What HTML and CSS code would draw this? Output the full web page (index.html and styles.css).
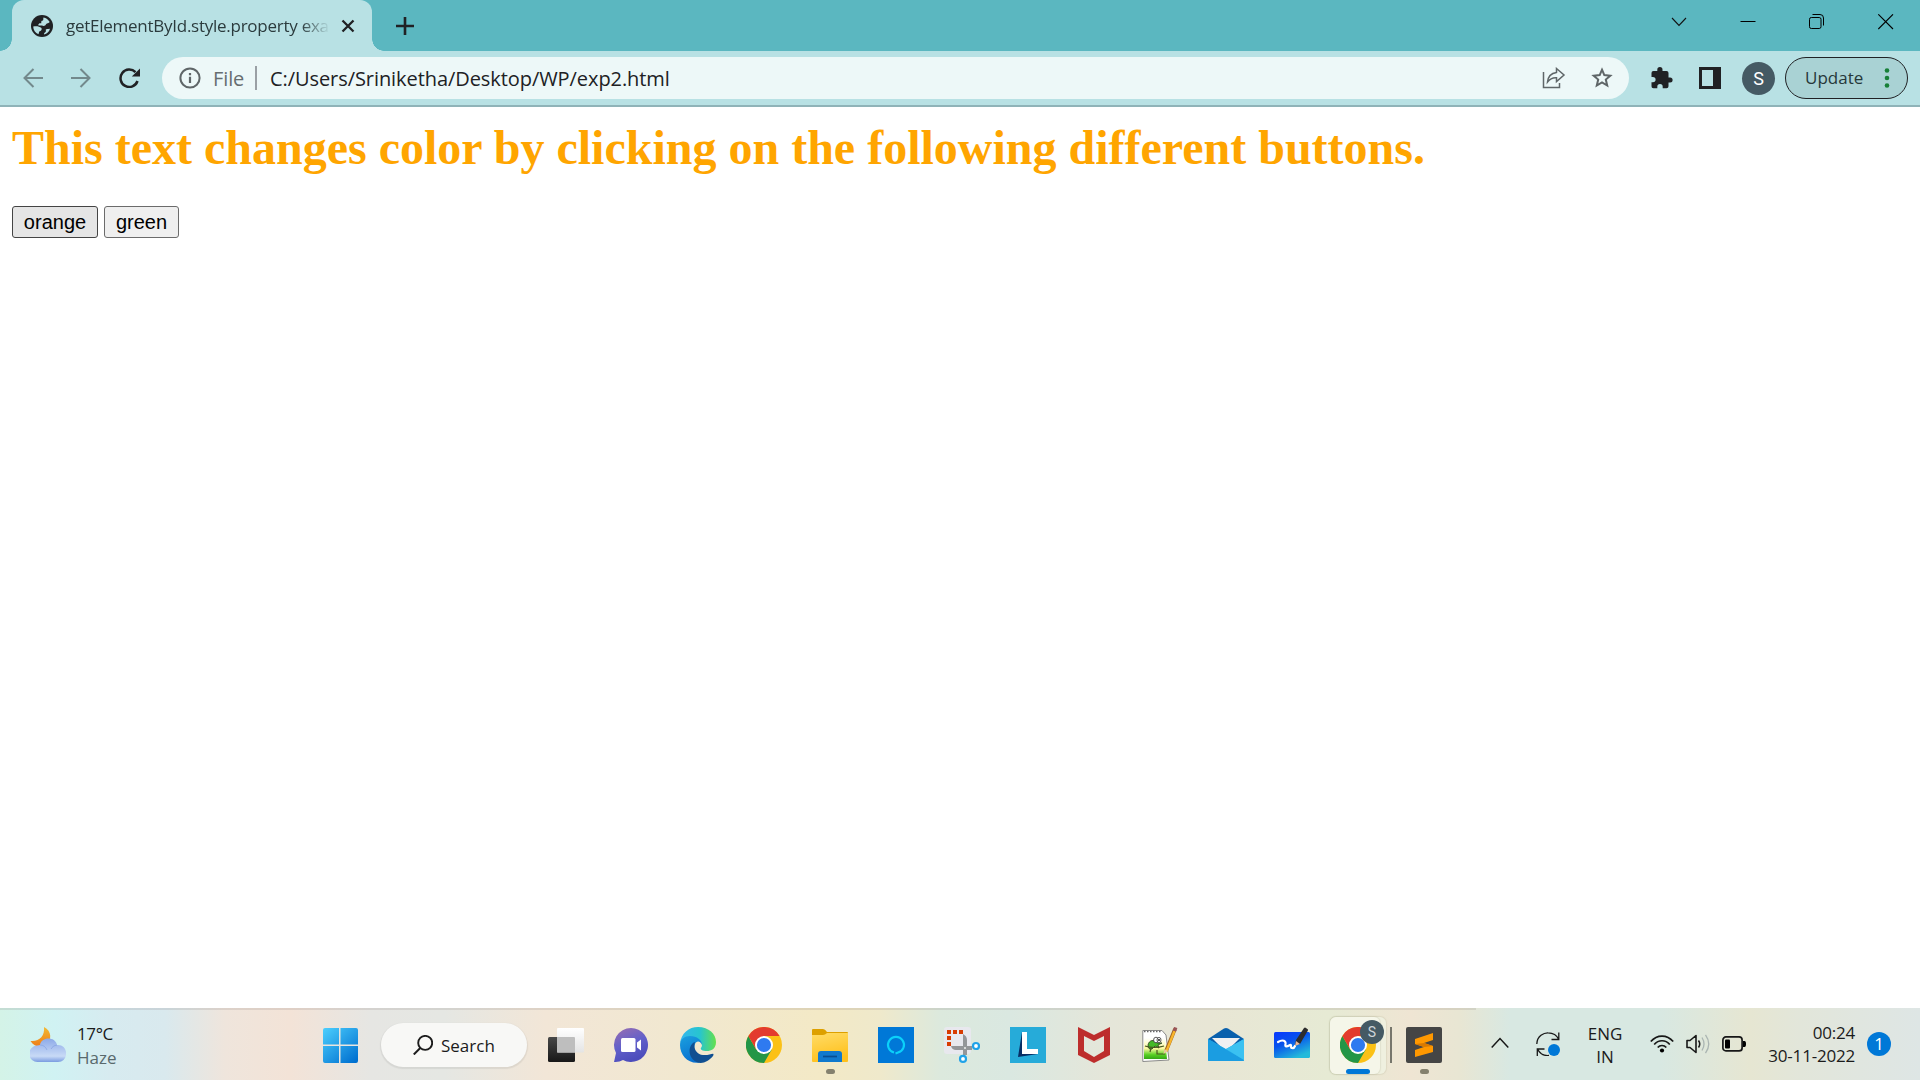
FILE: index.html
```html
<!DOCTYPE html>
<html lang="en">
<head>
<meta charset="utf-8">
<title>getElementById.style.property example</title>
<link rel="stylesheet" href="styles.css">
</head>
<body>
<header class="tabstrip">
  <div class="tab">
    <svg class="globe" viewBox="0 0 22 22"><circle cx="11" cy="11" r="11" fill="#202124"/><path d="M12.500 2.400C15 2.900 17.500 4.500 18.700 7C17.800 8.500 16 8 15 9.300C14.500 10.800 12.800 11.300 11 10.600H7.500C6.800 8.500 9 8.300 10.300 8.300C10.200 6.500 10 5.600 12 5.400C12.700 4.500 12 3.500 12.500 2.400Z" fill="#b8e1e4"/><path d="M2.200 11.400C5 11 8 10.800 10.500 13C11.200 14.800 10 16 8.200 16.500L7.500 19.200C4.300 17.800 2.200 15 2.200 11.400ZM13 19.500C12.500 17.700 14.500 17.600 15.100 16C14 14.500 15.300 13.600 17 14L19 13.800C18 17 16 19 13 19.500Z" fill="#b8e1e4"/></svg>
    <span class="tab-title">getElementById.style.property exa</span>
    <svg class="tab-close" viewBox="0 0 14 14"><path d="M1.500 1.500L12.500 12.500M12.500 1.500L1.500 12.500" stroke="#202124" stroke-width="2.300"/></svg>
  </div>
  <svg class="new-tab" viewBox="0 0 18 18"><path d="M9 0V18M0 9H18" stroke="#202124" stroke-width="2.600"/></svg>
  <div class="window-controls">
    <svg viewBox="0 0 16 16"><path d="M1 4L8 11.500L15 4" fill="none" stroke="#111" stroke-width="1.100"/></svg>
    <svg viewBox="0 0 16 16"><path d="M.5 7.500H15.500" stroke="#000"/></svg>
    <svg viewBox="0 0 16 16"><rect x=".5" y="3.500" width="11.500" height="11" rx="1.800" fill="none" stroke="#000"/><path d="M3.500 .5H11Q14.500 .5 14.500 4V11.500" fill="none" stroke="#000"/></svg>
    <svg viewBox="0 0 16 16"><path d="M.3 .3L15 15M15 .3L.3 15" stroke="#000" stroke-width="1.100"/></svg>
  </div>
</header>
<nav class="toolbar">
  <svg class="nav-icon" viewBox="0 0 20 20"><path d="M20 10H1.500M10.500 1L1.500 10L10.500 19" fill="none" stroke="#73898c" stroke-width="2"/></svg>
  <svg class="nav-icon" viewBox="0 0 20 20"><path d="M0 10H18.500M9.500 1L18.500 10L9.500 19" fill="none" stroke="#73898c" stroke-width="2"/></svg>
  <svg class="nav-icon reload" viewBox="0 0 22 20"><path d="M18.500 13A8.700 8.700 0 1 1 16.500 4.200" fill="none" stroke="#202124" stroke-width="2.500"/><path d="M21 .5V8.500H12.800Z" fill="#202124"/></svg>
  <div class="omnibox">
    <svg class="info" viewBox="0 0 22 22"><circle cx="11" cy="11" r="9.600" fill="none" stroke="#5f6668" stroke-width="2"/><path d="M11 9.800V16M11 6V8.300" stroke="#5f6668" stroke-width="2.200"/></svg>
    <span class="scheme">File</span>
    <span class="divider"></span>
    <span class="url">C:/Users/Sriniketha/Desktop/WP/exp2.html</span>
    <svg class="share" viewBox="0 0 24 22"><path d="M1.500 5V20.500H17.500V16" fill="none" stroke="#5f6668" stroke-width="1.500"/><path d="M14.500 1.500L22 8L14.500 14.500V10.800C10.500 10.500 7.800 12 5.500 15C6 9.500 9.500 6 14.500 5.400Z" fill="none" stroke="#5f6668" stroke-width="1.500"/></svg>
    <svg class="star" viewBox="0 0 22 22"><path d="M11 2.700L13.300 8.100L19.300 8.700L14.800 12.600L16.200 18.500L11 15.400L5.800 18.500L7.200 12.600L2.700 8.700L8.700 8.100Z" fill="none" stroke="#5f6668" stroke-width="2"/></svg>
  </div>
  <svg class="puzzle" viewBox="0 0 22 22"><path d="M19.100 10.500H17.500V6A2 2 0 0 0 15.500 4H11.500V2.700A2.600 2.600 0 0 0 6.300 2.700V4H2.400A2 2 0 0 0 .5 6V9.900H1.900A2.700 2.700 0 0 1 1.900 15.300H.5V19.200A2 2 0 0 0 2.500 21.300H6.300V19.800A2.700 2.700 0 0 1 11.700 19.800V21.300H15.500A2 2 0 0 0 17.500 19.300V15.500H19.100A2.500 2.500 0 0 0 19.100 10.500Z" fill="#202124"/></svg>
  <svg class="panel" viewBox="0 0 22 22"><path d="M0 0H22V22H0ZM3 3V19H14V3Z" fill="#202124" fill-rule="evenodd"/></svg>
  <span class="avatar">S</span>
  <div class="update"><span>Update</span><svg viewBox="0 0 6 20"><g fill="#188038"><circle cx="3" cy="2.500" r="2.300"/><circle cx="3" cy="10" r="2.300"/><circle cx="3" cy="17.500" r="2.300"/></g></svg></div>
</nav>
<main class="page">
  <h1 class="heading">This text changes color by clicking on the following different buttons.</h1>
  <div class="buttons">
    <button class="btn btn-active">orange</button>
    <button class="btn btn-green">green</button>
  </div>
</main>
<footer class="taskbar">
  <div class="weather">
    <svg viewBox="0 0 36 36"><defs><linearGradient id="moon" x2="0" y2="1"><stop stop-color="#f2ba35"/><stop offset="1" stop-color="#ef7d17"/></linearGradient><linearGradient id="cloud" x2="0" y2="1"><stop stop-color="#8daae8"/><stop offset=".75" stop-color="#c8daf6"/><stop offset="1" stop-color="#799be0"/></linearGradient></defs><path d="M14 0C22 4 22 13 16 18C11 21 4 20 .5 14C9 15 15 9 14 0Z" fill="url(#moon)"/><path d="M8 35A7 7 0 0 1 7 18.500Q9 18 10 18C11 10 25 9 27 18C39 17 39 35 28 35Z" fill="url(#cloud)"/><path d="M10 18Q15 18 17 23M27 18Q23 18 21 22" fill="none" stroke="#7e9ce0" opacity=".6"/></svg>
    <div class="weather-text"><span class="temp">17°C</span><span class="haze">Haze</span></div>
  </div>
  <div class="apps">
    <div class="app"><svg viewBox="0 0 36 36"><defs><linearGradient id="win" gradientUnits="userSpaceOnUse" x1="0" y1="0" x2="32" y2="36"><stop stop-color="#4fd2ff"/><stop offset="1" stop-color="#0070d0"/></linearGradient></defs><path d="M3 1H17V17.500H1V3Q1 1 3 1ZM18.500 1H34Q36 1 36 3V17.500H18.500ZM1 19H17V36H3Q1 36 1 34ZM18.500 19H36V34Q36 36 34 36H18.500Z" fill="url(#win)"/></svg></div>
    <div class="search-slot"><div class="search"><svg viewBox="0 0 20 20"><circle cx="12.200" cy="7.900" r="7" fill="none" stroke="#1c1c1c" stroke-width="1.900"/><path d="M7.500 12.800L.8 19.500" stroke="#1c1c1c" stroke-width="2"/></svg><span>Search</span></div></div>
    <div class="app"><svg viewBox="0 0 36 36"><defs><linearGradient id="tv" x2="0" y2="1"><stop stop-color="#484848"/><stop offset="1" stop-color="#181818"/></linearGradient><linearGradient id="tw" x2="0" y2="1"><stop stop-color="#fff"/><stop offset="1" stop-color="#e4e4e4"/></linearGradient></defs><rect y="10" width="27" height="25" rx="1.500" fill="url(#tv)"/><rect x="9" y="1" width="27" height="24.500" rx="1" fill="url(#tw)"/><path d="M9 10H26Q27 10 27 11V25.500H9Z" fill="#bebebe"/></svg></div>
    <div class="app"><svg viewBox="0 0 36 36"><defs><linearGradient id="chat" x2=".4" y2="1"><stop stop-color="#9a6eb0"/><stop offset=".55" stop-color="#6260ca"/><stop offset="1" stop-color="#4d4dbc"/></linearGradient></defs><path d="M17 1A17 17 0 1 1 9 33Q5 35.500 0 35L2 26A17 17 0 0 1 17 1Z" fill="url(#chat)"/><rect x="7" y="11" width="14.500" height="14" rx="1.500" fill="#fff"/><path d="M23 15.500L27 12.500V23.500L23 20.500Z" fill="#fff"/></svg></div>
    <div class="app"><svg viewBox="0 0 36 36"><defs><linearGradient id="e1"><stop stop-color="#35b6ef"/><stop offset=".55" stop-color="#27c5cf"/><stop offset="1" stop-color="#64e04d"/></linearGradient><linearGradient id="e2" x2=".4" y2="1"><stop stop-color="#1ba0df"/><stop offset="1" stop-color="#0870cf"/></linearGradient></defs><path d="M0 17C1 6 9 0 18 0C29 0 36 7 36 15C36 22 31 24 27 24C22 24 20 22.500 21 21C24 17 20 13 15 12C8 9 2 11 0 17Z" fill="url(#e1)"/><path d="M0 18C0 12 5 9 10 9C17 9 22 13 22 18C20 13 16 14 15 17C12 24 18 32 25 34C11 40 0 30 0 18Z" fill="url(#e2)"/><path d="M15 15C13 21 16 27 23 28C27 28.500 31 27 33 26.700Q34 27 33 29C29 34 23 37 18 35.500C10 33 7 23 12 17Q13 15.500 15 15Z" fill="#104f91"/></svg></div>
    <div class="app"><svg viewBox="0 0 36 36"><g id="chrome"><circle cx="18" cy="18" r="18" fill="#fbc116"/><path d="M2.400 9A18 18 0 0 0 18 36L25.800 22.500L10.200 22.500Z" fill="#239647"/><path d="M2.400 9A18 18 0 0 1 33.600 9H18L10.200 22.500Z" fill="#e33b2e"/><circle cx="18" cy="18" r="9" fill="#fff"/><circle cx="18" cy="18" r="7.100" fill="#2e7af0"/></g></svg></div>
    <div class="app"><svg viewBox="0 0 36 36"><defs><linearGradient id="fold" x2=".3" y2="1"><stop stop-color="#ffdc68"/><stop offset="1" stop-color="#ffc11d"/></linearGradient></defs><path d="M0 3Q0 2 1 2H11Q13 2 15 5H35Q36 5 36 6V16H0Z" fill="#dda000"/><path d="M0 8H11Q13 8 15 6H36V34Q36 35 35 35H1Q0 35 0 34Z" fill="url(#fold)"/><path d="M6 35V27Q6 24 9 24H27Q30 24 30 27V35Z" fill="#1079cd"/><path d="M11 29.500H25" stroke="#084d91" stroke-width="1.700"/></svg><i class="running"></i></div>
    <div class="app"><svg viewBox="0 0 36 36"><path d="M0 0H36V36H0Z" fill="#0078d7"/><path d="M16 25.600A8 8 0 1 1 20 25.600L17.500 26.500" fill="none" stroke="#0bd1fa" stroke-width="2.100"/></svg></div>
    <div class="app"><svg viewBox="0 0 36 36"><rect width="27" height="27" rx="3" fill="#e8e8ee"/><g fill="#d83b01"><path d="M3 3H7V7H3ZM9 3H13V7H9ZM15 3H19V7H15ZM3 9H7V13H3ZM3 15H7V19H3Z"/></g><path d="M19 7Q23 9 23 13V28H19ZM7 19H28V23H12Q8 23 7 19Z" fill="#949699"/><circle cx="21" cy="21" r="1" fill="#eee"/><circle cx="32" cy="19" r="3" fill="#fff" stroke="#20a2e8" stroke-width="2.200"/><circle cx="19" cy="31.900" r="3" fill="#fff" stroke="#20a2e8" stroke-width="2.200"/></svg></div>
    <div class="app"><svg viewBox="0 0 36 36"><path d="M0 0H36V36H0Z" fill="#26abd9"/><path d="M12 5L8 30L28 27L17 22Z" fill="#082e65"/><path d="M12 5H17V22H28V27H12Z" fill="#fff"/></svg></div>
    <div class="app"><svg viewBox="0 0 36 36"><path d="M2 0L18 8L34 0V28L18 36L2 28ZM8 9V24L18 30L28 24V9L18 14Z" fill="#bd2d2c" fill-rule="evenodd"/></svg></div>
    <div class="app"><svg viewBox="0 0 36 36"><defs><linearGradient id="note" x2="0" y2="1"><stop stop-color="#fff"/><stop offset=".5" stop-color="#fbf9a0"/><stop offset=".8" stop-color="#55cf22"/><stop offset="1" stop-color="#35a616"/></linearGradient></defs><path d="M.8 3.500H20L24 8L27 33L.8 34.500Z" fill="#fff" stroke="#8a8a8a"/><path d="M2 11H23L25 32H2Z" fill="url(#note)"/><path d="M2 4.500H20" stroke="#666" stroke-dasharray="1.500 1.500" stroke-width="1.500"/><path d="M6 18C7 13 12 12 15 16L20 16L16 18L17 21L13 19L10 22Q6 23 6 18Z" fill="#45b929" stroke="#243b19" stroke-width=".8"/><ellipse cx="14" cy="13" rx="2.400" ry="2.800" fill="#fff" stroke="#333" stroke-width=".8"/><ellipse cx="17" cy="13" rx="2" ry="2.600" fill="#fff" stroke="#333" stroke-width=".8"/><circle cx="17" cy="13" r=".9"/><path d="M3 19Q12 22 22 19M9 21L8 25M15 23V27H23" stroke="#4a5720" stroke-width="1.200" fill="none"/><path d="M33 2L24 24" stroke="#9e6424" stroke-width="3.600"/><path d="M32.500 4L24.500 24" stroke="#f9b62b" stroke-width="2.300"/><path d="M22.500 22L26 24L21.500 27Z" fill="#e8c99a"/><path d="M33.700 .5L32.500 4" stroke="#9a5557" stroke-width="3.500"/></svg></div>
    <div class="app"><svg viewBox="0 0 36 36"><path d="M0 12L16 1.500Q18 .3 20 1.500L36 12V20H0Z" fill="#0960ad"/><path d="M4 11H32L18 25Z" fill="#f0f0f2"/><path d="M0 12L18 22L36 12V33Q36 34 35 34H1Q0 34 0 33Z" fill="#23b0e9"/><path d="M0 12L36 33Q36 34 35 34H1Q0 34 0 33Z" fill="#1b9de1"/><path d="M36 12L18 22L36 33Z" fill="#3bc1f1"/></svg></div>
    <div class="app"><svg viewBox="0 0 36 36"><defs><linearGradient id="wb" x2=".6" y2="1"><stop stop-color="#0737ff"/><stop offset=".45" stop-color="#0752ec"/><stop offset="1" stop-color="#24bada"/></linearGradient></defs><rect y="5" width="36" height="26" rx="1.500" fill="url(#wb)"/><path d="M4 15C9 12 12 14 11.500 17C10.500 21 14 19 16 18C18 17 16 21 18 21Q20 21.500 21 19" fill="none" stroke="#fff" stroke-width="2.200" stroke-linecap="round"/><path d="M22 13L30 1Q31 0 32 1L34 2.500Q34 4 33 5L26 17L21 18Z" fill="#2d2d2d"/><path d="M22 14L26 17L21 19Z" fill="#e9b899"/></svg></div>
    <div class="app app-current"><div class="tile-back"></div><div class="tile"></div><svg viewBox="0 0 36 36"><use href="#chrome"/></svg><span class="profile">S</span><i class="current"></i></div>
    <div class="app app-sublime"><svg viewBox="0 0 36 36"><rect width="36" height="36" rx="2" fill="#454545"/><path d="M9 12L27 6V13L18 16L27 19V25L9 30V23L18 20L9 17Z" fill="#ff9800"/><path d="M9 17L18 20L27 19L18 16Z" fill="#d97900"/></svg><i class="running"></i></div>
  </div>
  <div class="tray">
    <svg class="chevron" viewBox="0 0 18 12"><path d="M.7 10.500L9 1.500L17.300 10.500" fill="none" stroke="#171717" stroke-width="1.500"/></svg>
    <svg class="sync" viewBox="0 0 24 24"><path d="M.8 12C1 4 8 .7 12 .8C17 .8 21 3.500 22.800 7.500M22.800 .5V7.500H15.500M1.300 24V17H8.500M1.500 17C4 22 8 24 13 23.500" fill="none" stroke="#191919" stroke-width="1.300"/><circle cx="18" cy="18" r="6" fill="#0078d7"/></svg>
    <div class="language"><span>ENG</span><span>IN</span></div>
    <svg class="wifi" viewBox="0 0 24 18"><path d="M.8 6.500C7 -.8 17 -.8 23.200 6.500M4.200 9.500C8.500 4.500 15.500 4.500 19.800 9.500M7.700 12.500C10 9.800 14 9.800 16.300 12.500" fill="none" stroke="#171717" stroke-width="1.700"/><circle cx="12" cy="15.500" r="2.100"/></svg>
    <svg class="sound" viewBox="0 0 24 20"><path d="M1 6.500H4L10 1.500V18.500L4 13.500H1Z" fill="none" stroke="#171717" stroke-width="1.600" stroke-linejoin="round"/><path d="M12.500 6.500Q15 10 12.500 13.500" fill="none" stroke="#171717" stroke-width="1.500"/><path d="M16 3.500Q20 10 16 16.500M19.500 .8Q26 10 19.500 19.200" fill="none" stroke="#aab5b2" stroke-width="1.300"/></svg>
    <svg class="battery" viewBox="0 0 24 16"><rect x=".9" y=".9" width="19.200" height="14" rx="3" fill="none" stroke="#171717" stroke-width="1.700"/><rect x="3" y="3.500" width="5" height="9" rx="1"/><path d="M21 5H22.500Q24 5 24 8T22.500 11H21Z"/></svg>
    <div class="clock"><span class="time">00:24</span><span class="date">30-11-2022</span></div>
    <span class="count">1</span>
  </div>
</footer>
</body>
</html>
```
FILE: styles.css
```css
* { box-sizing: border-box; }
body {
  margin: 0;
  width: 1920px;
  height: 1080px;
  display: flex;
  flex-direction: column;
  overflow: hidden;
  background: #fff;
  font-family: "Open Sans", sans-serif;
}
svg { display: block; flex: none; }
span { white-space: nowrap; }

.tabstrip {
  height: 51px;
  flex: none;
  display: flex;
  padding-left: 12px;
  background: #5bb7c0;
}
.tab {
  position: relative;
  width: 360px;
  height: 51px;
  display: flex;
  align-items: center;
  padding: 0 18px 0 19px;
  border-radius: 12px 12px 0 0;
  background: #b8e1e4;
}
.tab::before, .tab::after {
  content: "";
  position: absolute;
  bottom: 0;
  width: 12px;
  height: 12px;
}
.tab::before { left: -12px; background: radial-gradient(circle at 0 0, transparent 11.5px, #b8e1e4 12px); }
.tab::after { right: -12px; background: radial-gradient(circle at 100% 0, transparent 11.5px, #b8e1e4 12px); }
.globe { width: 22px; height: 22px; }
.tab-title {
  width: 264px;
  margin-left: 13px;
  font-size: 17px;
  line-height: 28px;
  letter-spacing: -.26px;
  color: #2b3b3d;
  -webkit-mask-image: linear-gradient(90deg, #000 235px, transparent 264px);
  mask-image: linear-gradient(90deg, #000 235px, transparent 264px);
}
.tab-close { width: 14px; height: 14px; margin-left: 12px; }
.new-tab { width: 18px; height: 18px; margin: 17px 0 0 24px; }
.window-controls {
  display: flex;
  gap: 53px;
  margin: 14px 26px 0 auto;
}
.window-controls svg { width: 16px; height: 16px; }

.toolbar {
  height: 56px;
  flex: none;
  display: flex;
  align-items: center;
  padding: 0 12px 0 23px;
  border-bottom: 2px solid #8fb3b8;
  background: #b8e1e4;
}
.nav-icon { width: 20px; height: 20px; margin-right: 28px; }
.nav-icon.reload { width: 22px; margin-right: 21px; }
.omnibox {
  width: 1467px;
  height: 42px;
  flex: none;
  display: flex;
  align-items: center;
  padding: 0 16px 0 17px;
  border-radius: 21px;
  background: #edf8f8;
  font-size: 20px;
}
.info { width: 22px; height: 22px; }
.scheme { margin-left: 12px; width: 32px; color: #666d70; letter-spacing: -.1px; }
.divider { width: 2px; height: 24px; margin-left: 10px; background: #9aa0a5; }
.url { margin-left: 13px; color: #202124; letter-spacing: -.07px; }
.share { width: 24px; height: 22px; margin-left: auto; }
.star { width: 22px; height: 22px; margin-left: 25px; }
.puzzle { width: 22px; height: 22px; margin-left: 22px; }
.panel { width: 22px; height: 22px; margin-left: 26px; }
.avatar {
  width: 33px;
  height: 33px;
  flex: none;
  margin-left: 21px;
  border-radius: 50%;
  background: #455a64;
  color: #fff;
  font: 18px/33px Roboto, sans-serif;
  text-align: center;
}
.update {
  width: 123px;
  height: 42px;
  flex: none;
  display: flex;
  align-items: center;
  justify-content: space-between;
  margin-left: 10px;
  padding: 0 17px 0 19px;
  border: 1.5px solid #202124;
  border-radius: 21px;
  background: #a9d2d4;
  color: #26383a;
  font-size: 17px;
}
.update span { padding-bottom: 1px; }
.update svg { width: 6px; height: 20px; }

.page { flex: 1; padding: 13px 12px 12px; }
.heading {
  margin: 0;
  font: bold 48px/55px "Liberation Serif", serif;
  color: #ffa500;
  white-space: nowrap;
}
.buttons { display: flex; gap: 6px; margin-top: 31px; }
.btn {
  width: 86px;
  height: 32px;
  padding: 0;
  border: 1px solid #6b6b6b;
  border-radius: 3px;
  background: #efefef;
  color: #000;
  font: 20px/30px "Liberation Sans", sans-serif;
}
.btn-active { background: #e5e5e5; border-color: #444; }
.btn-green { width: 75px; }

.taskbar {
  position: relative;
  height: 72px;
  flex: none;
  display: flex;
  color: #1b1b1b;
  font-size: 17px;
  background: linear-gradient(90deg, #d4f3e7 0, #d0f2f3 55px, #d7ebf0 110px, #d9e9ee 165px, #efe5dc 225px, #f3e3d7 290px, #e6e6e3 370px, #e5e7e3 445px, #f2e6d7 545px, #f1e8d0 680px, #f3e9c6 820px, #efe9cb 880px, #dce9dd 940px, #dae8e1 1010px, #e5e6d9 1110px, #e8e6d5 1210px, #e6ead4 1330px, #efe5d3 1410px, #e8e6d3 1460px, #d8e8e2 1510px, #d8e8e2 1660px, #e6e6d2 1750px, #e2e6da 1800px, #dee6e5 1920px);
}
.taskbar::before {
  content: "";
  position: absolute;
  left: 0;
  top: 0;
  width: 1476px;
  height: 2px;
  background: rgba(90, 80, 80, .13);
}
.weather { width: 307px; display: flex; padding: 19px 0 0 30px; }
.weather svg { width: 36px; height: 36px; }
.weather-text { display: flex; flex-direction: column; margin: -5px 0 0 11px; line-height: 24px; }
.temp { letter-spacing: -.4px; }
.haze { color: #59696d; }
.apps { display: flex; width: 1150px; height: 72px; flex: none; }
.app {
  position: relative;
  width: 66px;
  flex: none;
  padding: 19px 15px 0;
}
.app svg { position: relative; width: 36px; height: 36px; }
.search-slot { width: 160px; flex: none; padding: 15px 0 0 8px; }
.search {
  width: 146px;
  height: 44px;
  display: flex;
  align-items: center;
  gap: 8px;
  padding: 0 0 1px 32px;
  border-radius: 22px;
  background: #f8f8f6;
  box-shadow: 0 1px 1px 1px rgba(80, 80, 80, .1);
}
.search svg { width: 20px; height: 20px; }
.search span { padding-top: 1px; }
.running, .current {
  position: absolute;
  left: 29px;
  top: 61px;
  width: 9px;
  height: 5px;
  border-radius: 3px;
  background: #85816e;
}
.current { left: 21px; width: 24px; background: #0078d7; }
.tile, .tile-back {
  position: absolute;
  left: 5px;
  top: 9px;
  width: 50px;
  height: 57px;
  border-radius: 6px;
  background: #f5f6e9;
  box-shadow: 0 0 1px 1px rgba(120, 120, 80, .12);
}
.tile-back { width: 56px; background: #eff0df; }
.profile {
  position: absolute;
  left: 35px;
  top: 12px;
  width: 24px;
  height: 24px;
  border-radius: 50%;
  background: #455a64;
  color: #cfd6da;
  font: 14px/24px Roboto, sans-serif;
  text-align: center;
}
.app-sublime::before {
  content: "";
  position: absolute;
  left: -1px;
  top: 19px;
  width: 2px;
  height: 36px;
  background: #77766c;
}
.tray { flex: 1; display: flex; padding-left: 34px; }
.chevron { width: 18px; height: 12px; margin-top: 29px; }
.sync { width: 24px; height: 24px; margin: 24px 0 0 27px; }
.language {
  width: 50px;
  display: flex;
  flex-direction: column;
  align-items: center;
  margin: 14px 0 0 20px;
  line-height: 23px;
}
.wifi { width: 24px; height: 18px; margin: 27px 0 0 20px; }
.sound { width: 24px; height: 20px; margin: 26px 0 0 12px; }
.battery { width: 24px; height: 16px; margin: 28px 0 0 12px; }
.clock {
  width: 109px;
  display: flex;
  flex-direction: column;
  align-items: flex-end;
  margin-top: 13px;
  line-height: 23px;
}
.time, .date { letter-spacing: -.2px; }
.count {
  width: 24px;
  height: 24px;
  margin: 24px 0 0 12px;
  border-radius: 50%;
  background: #0078d7;
  color: #fff;
  font-size: 17px;
  line-height: 24px;
  text-align: center;
}
```
